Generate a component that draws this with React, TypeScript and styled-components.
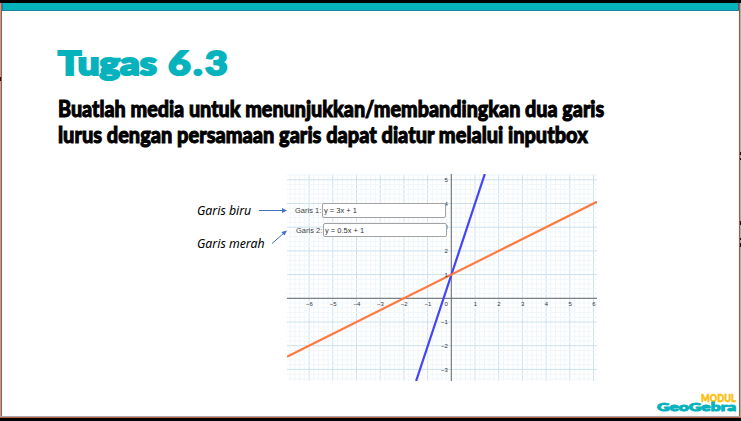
import React from "react";
import styled, { createGlobalStyle } from "styled-components";

const Reset = createGlobalStyle`
  * { box-sizing: border-box; }
  body { margin: 0; background: #fff; overflow: hidden; }
`;

const Viewer = styled.div`
  width: 741px;
  height: 421px;
  display: grid;
  grid-template-rows: 3px 413px 1px 1px 3px;
  background: #000;
  overflow: hidden;
`;

const Row = styled.div`
  display: grid;
  grid-template-columns: 1px 1px 737px 1px 1px;
`;

const Bar = styled.div<{ $color: string }>`
  background: ${(p) => p.$color};
`;

const LeftGutter = styled.div`
  background: linear-gradient(#a6a6a6 0 74px, #111 74px 78px, #a6a6a6 78px);
`;

const RightGutter = styled.div`
  background: linear-gradient(
    #b4acac 0 149px, #2a0c0c 149px 152px, #b4acac 152px 155px, #2a0c0c 155px 157px,
    #b4acac 157px 218px, #2a0c0c 218px 222px, #b4acac 222px 235px, #2a0c0c 235px 237px,
    #b4acac 237px 240px, #2a0c0c 240px 244px, #b4acac 244px
  );
`;

const Slide = styled.main`
  background: #fff;
  display: flex;
  flex-direction: column;
  height: 413px;
`;

const Banner = styled.div`
  flex: none;
  height: 8px;
  background: #06b3bd;
  border-bottom: 1px solid #1684a0;
  border-right: 1px solid #2c6b92;
  border-left: 1px solid #1684a0;
`;

const Title = styled.h1`
  margin: 30px 0 0 56px;
  height: 42px;
  width: max-content;
  font: 900 33px/42px Lato, sans-serif;
  color: #06b3bd;
  white-space: nowrap;
  -webkit-text-stroke: 2.2px #06b3bd;
  transform-origin: 0 50%;
  transform: scaleX(1.165);
`;

const TitleNumber = styled.span`
  margin-left: 2px;
  letter-spacing: 2.4px;
`;

const Heading = styled.h2`
  margin: 13px 0 0 56px;
  font: 900 22.5px/26px Lato, sans-serif;
  color: #000;
`;

const HeadingLine = styled.div<{ $scale: number }>`
  width: max-content;
  height: 26px;
  white-space: nowrap;
  -webkit-text-stroke: 1px #000;
  transform-origin: 0 50%;
  transform: scaleX(${(p) => p.$scale});
`;

const Figure = styled.section`
  display: flex;
  flex: none;
  height: 207px;
  margin: 26px 0 0 195px;
`;

const Legend = styled.div`
  width: 90px;
  display: grid;
  grid-template-columns: 90px;
  grid-template-rows: 56px 33px;
`;

const LegendItem = styled.div`
  display: flex;
  align-items: flex-end;
  gap: 6px;
  font: italic 12.3px/16px "Noto Sans", sans-serif;
  color: #000;
  white-space: nowrap;
`;

const LegendText = styled.span<{ $pad: number; $width: number }>`
  width: ${(p) => p.$width}px;
  padding-bottom: ${(p) => p.$pad}px;
`;

const Arrow = styled.svg`
  flex: none;
  overflow: visible;
`;

const Plot = styled.div`
  position: relative;
  width: 310px;
  height: 207px;
`;

const Chart = styled.svg`
  display: block;
`;

const Inputs = styled.div`
  position: absolute;
  left: 8px;
  top: 29px;
  display: flex;
  flex-direction: column;
  gap: 5px;
`;

const Field = styled.label<{ $shift: number }>`
  display: flex;
  align-items: center;
  height: 14.5px;
  margin-left: ${(p) => p.$shift}px;
  font: 7.5px/14px "Liberation Sans", Arial, sans-serif;
  color: #444;
`;

const FieldName = styled.span`
  width: 27px;
  padding-top: 2px;
  white-space: nowrap;
`;

const FieldBox = styled.span`
  width: 124px;
  height: 14.5px;
  padding-left: 1px;
  border: 1px solid #a3a3a3;
  border-radius: 2px;
  background: #fff;
  color: #333;
  line-height: 14px;
`;

const Footer = styled.footer`
  margin: auto 3px 1px auto;
  display: flex;
  flex-direction: column;
  align-items: flex-end;
  height: 23px;
`;

const Modul = styled.span`
  font: 900 11px/11px Lato, sans-serif;
  color: #fdc010;
  -webkit-text-stroke: 0.6px #fdc010;
  transform-origin: 100% 50%;
  transform: scaleX(0.83);
`;

const Brand = styled.span`
  font: 900 11.5px/11px Lato, sans-serif;
  margin-top: -2px;
  color: #06b3bd;
  -webkit-text-stroke: 0.9px #06b3bd;
  transform-origin: 100% 50%;
  transform: scaleX(1.52);
`;

const OX = 164.3;
const OY = 124.3;
const UNIT = 23.7;

const px = (x: number) => OX + x * UNIT;
const py = (y: number) => OY - y * UNIT;

const range = (a: number, b: number) =>
  Array.from({ length: b - a + 1 }, (_, i) => a + i);

function Grid() {
  return (
    <g>
      {range(-34, 30).map((i) => (
        <line key={`v${i}`} x1={px(i / 5)} x2={px(i / 5)} y1={0} y2={207}
          stroke={i % 5 ? "#f0f6f9" : "#cbe1ef"} strokeWidth={1} />
      ))}
      {range(-17, 26).map((i) => (
        <line key={`h${i}`} y1={py(i / 5)} y2={py(i / 5)} x1={0} x2={310}
          stroke={i % 5 ? "#f0f6f9" : "#cbe1ef"} strokeWidth={1} />
      ))}
    </g>
  );
}

const sign = (n: number) => (n < 0 ? `−${-n}` : `${n}`);

function Graph() {
  return (
    <Chart width="310" height="207" viewBox="0 0 310 207">
      <Grid />
      <line x1={0} x2={310} y1={OY} y2={OY} stroke="#6a6a6a" />
      <line x1={OX} x2={OX} y1={0} y2={207} stroke="#6a6a6a" />
      <line x1={px(-1.485)} y1={207} x2={px(1.415)} y2={0} stroke="#4343fa" strokeWidth={2.2} />
      <line x1={0} y1={py(1 - OX / UNIT / 2)} x2={310} y2={py(1 + (310 - OX) / UNIT / 2)}
        stroke="#ff7840" strokeWidth={2.1} />
      <g fontFamily="Liberation Sans, Arial, sans-serif" fontSize="6" fill="#333">
        {range(-6, 6).filter((n) => n !== 0).map((n) => (
          <text key={n} x={px(n) + 0.3} y={132} textAnchor="middle">{sign(n)}</text>
        ))}
        <text x={160.8} y={132} textAnchor="end">0</text>
        {range(-3, 5).filter((n) => n !== 0).map((n) => (
          <text key={n} x={160.8} y={py(n) + 2.2} textAnchor="end">{sign(n)}</text>
        ))}
      </g>
    </Chart>
  );
}

export default function App() {
  return (
    <>
      <Reset />
      <Viewer>
        <Bar $color="#000" />
        <Row>
          <LeftGutter />
          <Bar $color="#b5533a" />
          <Slide>
            <Banner />
            <Title>Tugas <TitleNumber>6.3</TitleNumber></Title>
            <Heading>
              <HeadingLine $scale={0.877}>Buatlah media untuk menunjukkan/membandingkan dua garis</HeadingLine>
              <HeadingLine $scale={0.887}>lurus dengan persamaan garis dapat diatur melalui inputbox</HeadingLine>
            </Heading>
            <Figure>
              <Legend>
                <LegendItem>
                  <LegendText $width={56} $pad={11}>Garis biru</LegendText>
                  <Arrow width="28" height="38" viewBox="0 0 28 38">
                    <path d="M0 18.5H24" stroke="#4472c4" />
                    <path d="M28 18.5L23 16V21Z" fill="#4472c4" />
                  </Arrow>
                </LegendItem>
                <LegendItem>
                  <LegendText $width={69} $pad={11}>Garis merah</LegendText>
                  <Arrow width="15" height="33" viewBox="0 0 15 33">
                    <path d="M0 13.5L12 3" stroke="#4472c4" />
                    <path d="M15 .5L12.5 5.5L9.3 1.9Z" fill="#4472c4" />
                  </Arrow>
                </LegendItem>
              </Legend>
              <Plot>
                <Graph />
                <Inputs>
                  <Field $shift={0}>
                    <FieldName>Garis 1:</FieldName>
                    <FieldBox>y = 3x + 1</FieldBox>
                  </Field>
                  <Field $shift={1}>
                    <FieldName>Garis 2:</FieldName>
                    <FieldBox>y = 0.5x + 1</FieldBox>
                  </Field>
                </Inputs>
              </Plot>
            </Figure>
            <Footer>
              <Modul>MODUL</Modul>
              <Brand>GeoGebra</Brand>
            </Footer>
          </Slide>
          <Bar $color="#c84a2c" />
          <RightGutter />
        </Row>
        <Bar $color="#a9a6b0" />
        <Bar $color="#b8643c" />
        <Bar $color="#000" />
      </Viewer>
    </>
  );
}
